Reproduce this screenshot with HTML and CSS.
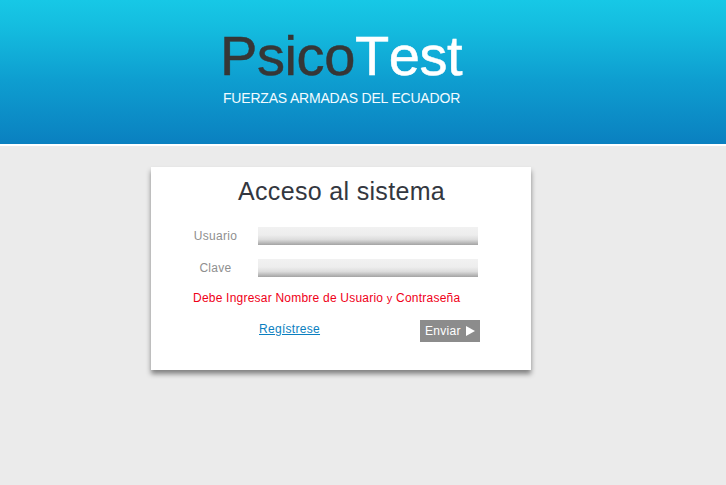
FILE: index.html
```html
<!DOCTYPE html>
<html lang="es">
<head>
<meta charset="utf-8">
<title>PsicoTest</title>
<link rel="stylesheet" href="styles.css">
</head>
<body>
<header class="header">
  <h1 class="logo">Psico<span class="logo-light">Test</span></h1>
  <p class="tagline">FUERZAS ARMADAS DEL ECUADOR</p>
</header>
<main class="card">
  <h2 class="title">Acceso al sistema</h2>
  <form class="form">
    <div class="row"><label class="label" for="user">Usuario</label><input class="field" id="user" type="text"></div>
    <div class="row"><label class="label" for="pass">Clave</label><input class="field" id="pass" type="password"></div>
    <p class="error">Debe Ingresar Nombre de Usuario <span class="error-and">y</span> Contraseña</p>
    <div class="actions">
      <a class="register" href="#">Regístrese</a>
      <button class="submit" type="button">Enviar<svg class="arrow" viewBox="0 0 9 10"><path d="M0 0L9 5L0 10Z"/></svg></button>
    </div>
  </form>
</main>
</body>
</html>
```
FILE: styles.css
```css
* { box-sizing: border-box; }
body {
  margin: 0;
  min-height: 485px;
  background: #ebebeb;
  font-family: "Liberation Sans", Arial, sans-serif;
  font-size: 12px;
}
h1, h2, p { margin: 0; font-weight: normal; }
.header {
  height: 146px;
  padding: 24px 0 0 220px;
  border-bottom: 2px solid #fff;
  background: linear-gradient(#17c8e6 0, #14bcdf 28px, #0e9ed0 80px, #0a80c0 144px);
}
.logo {
  height: 64px;
  font-size: 56px;
  line-height: 64px;
  letter-spacing: -.4px;
  font-kerning: none;
  color: #363636;
  -webkit-text-stroke: .5px;
}
.logo-light { color: #fff; }
.tagline {
  margin-left: 3px;
  padding-top: 2px;
  font-size: 14px;
  line-height: 16px;
  letter-spacing: -.19px;
  color: #f2fbff;
}
.card {
  width: 380px;
  height: 203px;
  margin: 21px 0 0 151px;
  padding-top: 10px;
  background: #fff;
  box-shadow: 0 4px 5px rgba(0, 0, 0, .45);
}
.title {
  height: 30px;
  padding-left: 87px;
  font-size: 25px;
  line-height: 29px;
  letter-spacing: .33px;
  color: #333740;
}
.form { padding: 20px 51px 0 42px; }
.row { display: flex; height: 18px; margin-bottom: 14px; }
.label {
  width: 65px;
  padding-right: 20px;
  line-height: 18px;
  letter-spacing: .3px;
  text-align: center;
  color: #8f8f8f;
}
.field {
  width: 220px;
  height: 18px;
  padding: 0 4px;
  border: 0;
  border-radius: 0;
  background: linear-gradient(#f1f1f1, #ededed 45%, #dcdcdc 70%, #a3a3a3);
}
.error {
  height: 14px;
  line-height: 14px;
  letter-spacing: .22px;
  color: #f00018;
}
.error-and { font-size: 11px; }
.actions {
  display: flex;
  justify-content: space-between;
  width: 287px;
  margin-top: 15px;
  padding-left: 66px;
}
.register {
  line-height: 18px;
  letter-spacing: .3px;
  color: #0b7fc0;
}
.submit {
  display: flex;
  align-items: center;
  width: 60px;
  height: 22px;
  padding: 0 5px;
  border: 0;
  background: #8c8c8c;
  color: #fff;
  font: 12px/22px "Liberation Sans", Arial, sans-serif;
  letter-spacing: .3px;
}
.arrow { width: 9px; height: 10px; margin-left: 5px; fill: #fff; }
```
